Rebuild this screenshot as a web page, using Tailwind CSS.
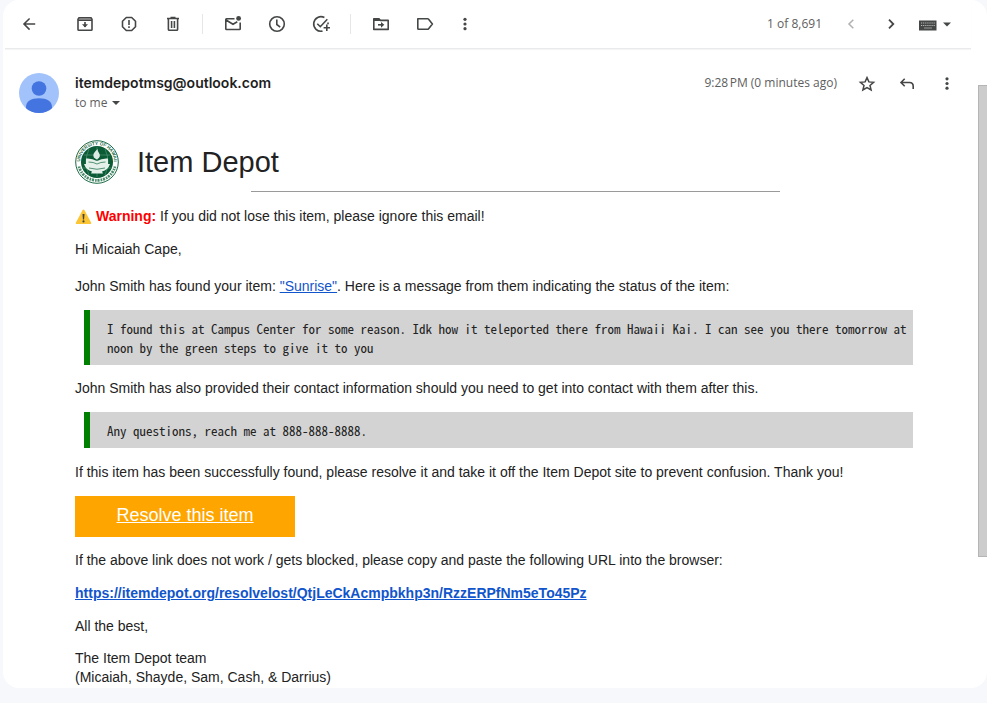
<!DOCTYPE html>
<html lang="en">
<head>
<meta charset="utf-8">
<meta name="viewport" content="width=device-width, initial-scale=1">
<title>Item Depot - Mail</title>
<script src="https://cdn.jsdelivr.net/npm/@tailwindcss/browser@4"></script>
</head>
<body class="min-h-screen bg-[#f6f8fc] pl-[3px] pb-[15px] text-[#222]">
<div class="flex overflow-hidden rounded-2xl bg-white">
  <main class="min-w-0 flex-1">
    <header class="ml-[2px] mr-[7px] flex h-[49px] items-center border-b border-[#e9eaeb] pl-[2px] font-['Open_Sans',sans-serif] text-[#444746] shadow-[0_1px_1px_#f5f5f5]">
      <button aria-label="Back" class="mr-3 flex h-10 w-11 items-center justify-center"><svg class="size-4" viewBox="4 4 16 16" fill="currentColor"><path d="M20 11H7.830l5.590-5.590L12 4l-8 8 8 8 1.410-1.410L7.830 13H20v-2z" transform="translate(2.8 2.8) scale(.77)"/></svg></button>
      <button aria-label="Archive" class="flex h-10 w-11 items-center justify-center"><svg class="size-5" viewBox="0 0 20 20" fill="none" stroke="currentColor" stroke-width="1.600"><path d="M4 3.800h12l1 1.400v10.200q0 .8-.8.8H3.800q-.8 0-.8-.8V5.200z"/><path d="M3 6.200h14M10 8v5"/><path d="M7 10.300h6l-3 3.300z" fill="currentColor" stroke="none"/><path d="M4 4h12v2H4z" fill="currentColor" fill-opacity=".35" stroke="none"/></svg></button>
      <button aria-label="Report spam" class="flex h-10 w-11 items-center justify-center"><svg class="size-5" viewBox="0 0 20 20" fill="none" stroke="currentColor" stroke-width="1.600"><path d="M7.300 3.500h5.400l3.800 3.800v5.400l-3.800 3.800H7.300l-3.800-3.800V7.300z" stroke-linejoin="round"/><path d="M10 6v5M10 12.300v1.700"/></svg></button>
      <button aria-label="Delete" class="flex h-10 w-11 items-center justify-center"><svg class="size-5" viewBox="0 0 20 20" fill="none" stroke="currentColor" stroke-width="1.600"><path d="M4 4.500h12M7.500 3.600h5M5.400 5v10.400q0 .9.900.9h7.400q.9 0 .9-.9V5M8.600 7v7M11.400 7v7"/></svg></button>
      <span class="ml-[7px] mr-2 h-5 w-px bg-[#e6e6e6]"></span>
      <button aria-label="Mark as unread" class="flex h-10 w-11 items-center justify-center"><svg class="size-5" viewBox="0 0 20 20" fill="none" stroke="currentColor" stroke-width="1.600"><path d="M11.500 4.800H3.500q-.7 0-.7.7v9.300q0 .7.700.7h13q.7 0 .7-.7V8.500M3 6l7 4.300 4.300-2.600"/><circle cx="15.600" cy="4.400" r="2.400" fill="currentColor" stroke="none"/></svg></button>
      <button aria-label="Snooze" class="flex h-10 w-11 items-center justify-center"><svg class="size-5" viewBox="0 0 20 20" fill="none" stroke="currentColor" stroke-width="1.600"><circle cx="10" cy="10" r="7.300"/><path d="M9.800 5.500v5l3.400 2.600"/></svg></button>
      <button aria-label="Add to tasks" class="flex h-10 w-11 items-center justify-center"><svg class="size-5" viewBox="0 0 20 20" fill="none" stroke="currentColor" stroke-width="1.600"><path d="M13.400 3.500A7.300 7.300 0 1 0 11.500 17.100M16.800 8.500q.3.900.3 1.800M6.300 9.700l3 3 7-7.500M15.800 10.500v6.400M12.600 13.700H19"/></svg></button>
      <span class="ml-[7px] mr-2 h-5 w-px bg-[#e6e6e6]"></span>
      <button aria-label="Move to" class="flex h-10 w-11 items-center justify-center"><svg class="size-5" viewBox="0 0 20 20" fill="none" stroke="currentColor" stroke-width="1.600"><path d="M2.800 4.800h5l1.600 1.600h7.800v9H2.800z" stroke-linejoin="round"/><path d="M2.800 4.200h5.500l1.500 2.800h-7z" fill="currentColor" stroke="none"/><path d="M7 10.800h4"/><path d="M10 7.900l3.300 2.900-3.300 2.900z" fill="currentColor" stroke="none"/></svg></button>
      <button aria-label="Labels" class="flex h-10 w-11 items-center justify-center"><svg class="size-5" viewBox="0 0 20 20" fill="none" stroke="currentColor" stroke-width="1.600" stroke-linejoin="round"><path d="M2.800 4.700h9.800q.5 0 .8.400l4 4.900-4 4.900q-.3.400-.8.400H3.500q-.7 0-.7-.7z"/></svg></button>
      <button aria-label="More" class="flex h-10 w-9 items-center justify-center"><svg class="size-5" viewBox="0 0 20 20" fill="currentColor"><circle cx="10" cy="5.300" r="1.600"/><circle cx="10" cy="10" r="1.600"/><circle cx="10" cy="14.700" r="1.600"/></svg></button>
      <span class="ml-auto mr-[9px] text-xs text-[#5e5e5e]">1 of 8,691</span>
      <button aria-label="Newer" class="flex h-10 w-10 items-center justify-center text-[#b0b1b1]"><svg class="size-5" viewBox="0 0 20 20" fill="none" stroke="currentColor" stroke-width="1.500"><path d="M12.300 5.700L8 10l4.300 4.300"/></svg></button>
      <button aria-label="Older" class="flex h-10 w-10 items-center justify-center"><svg class="size-5" viewBox="0 0 20 20" fill="none" stroke="currentColor" stroke-width="1.800"><path d="M8 5.700l4.300 4.300L8 14.300"/></svg></button>
      <button aria-label="Input tools" class="flex h-10 w-[60px] items-center gap-[6px] pl-2"><svg class="h-5 w-[18px]" viewBox="0 0 18 20"><path d="M0 6.500h17.500v10H0z" fill="#444746"/><path d="M2 9h14M2 11.500h14" stroke="#bbb" stroke-width="1.200" stroke-dasharray="1.200 .9"/><path d="M5 14h8" stroke="#999" stroke-width="1"/></svg><svg class="h-5 w-2" viewBox="0 0 8 20" fill="#444746"><path d="M0 8.500h8l-4 4z"/></svg></button>
    </header>

    <article class="pl-4 pr-[11px] pt-6 font-['Liberation_Sans',Arial,sans-serif]">
      <div class="flex items-start font-['Open_Sans',sans-serif]">
        <svg class="size-10 shrink-0" viewBox="0 0 40 40"><clipPath id="disc"><circle cx="20" cy="20" r="20"/></clipPath><circle cx="20" cy="20" r="20" fill="#a1c2fa"/><g clip-path="url(#disc)" fill="#4374e0"><circle cx="20" cy="15.500" r="7.300"/><path d="M7 34c0-6 5-8.800 13-8.800S33 28 33 34v6H7z"/></g></svg>
        <div class="ml-4 flex-1">
          <h3 class="text-sm leading-5 font-semibold text-[#1f1f1f] font-['Inter',sans-serif]">itemdepotmsg@outlook.com</h3>
          <button class="flex h-5 items-center gap-[5px] text-xs text-[#5e5e5e]">to me <svg class="h-2 w-2" viewBox="0 0 8 8" fill="#444746"><path d="M0 2h8L4 6z"/></svg></button>
        </div>
        <time class="mr-[10px] text-xs leading-5 text-[#5e5e5e]">9:28&#8239;PM (0 minutes ago)</time>
        <button aria-label="Star" class="flex h-[22px] w-10 items-center justify-center"><svg class="size-5" viewBox="0 0 20 20" fill="none" stroke="#444746" stroke-width="1.500"><path d="M10 3.600l1.900 4.300 4.700.4-3.600 3.100 1.100 4.600-4.100-2.400L5.900 16 7 11.400 3.400 8.300l4.700-.4z"/></svg></button>
        <button aria-label="Reply" class="flex h-[22px] w-10 items-center justify-center"><svg class="size-5" viewBox="0 0 20 20" fill="none" stroke="#444746" stroke-width="1.600"><path d="M7.700 4.800L4 8.500l3.700 3.700M4 8.500h8.500q3.700 0 3.700 3.700V15"/></svg></button>
        <button aria-label="More options" class="flex h-[22px] w-10 items-center justify-center"><svg class="size-5" viewBox="0 0 20 20" fill="#444746"><circle cx="10" cy="4.800" r="1.600"/><circle cx="10" cy="9.500" r="1.600"/><circle cx="10" cy="14.200" r="1.600"/></svg></button>
      </div>

      <div class="ml-14 mr-[11px] mt-[27px] pb-px text-sm leading-[19px]">
        <div class="flex items-center gap-[18px]">
          <svg class="size-11" viewBox="0 0 44 44" fill="none">
            <circle cx="22" cy="22" r="21.300" fill="#fff" stroke="#1c6b46" stroke-width="1"/>
            <circle cx="22" cy="22" r="16" fill="#0b5c36"/>
            <path id="ring" d="M8.200 31.500A16.900 16.900 0 1 1 35.800 31.500"/>
            <text fill="#1c6b46" font-size="4.600" font-weight="bold" font-family="Liberation Sans" text-anchor="middle"><textPath href="#ring" startOffset="50%">UNIVERSITY OF HAWAII</textPath></text>
            <path d="M4 26.500A18.600 18.600 0 0 0 40 26.500" stroke="#4c8b6c" stroke-width="2.800" stroke-dasharray="1.600 .8 2.200 1"/>
            <path d="M9 15h26M7 28h30M22 7v30M14 9q-6 13 0 26M30 9q6 13 0 26" stroke="#5d9a7c" stroke-width=".6"/>
            <path d="M11 18.500q6-.5 11 2.500 5-3 11-2.500v5.500h2q-2 6-8 7.500l1 2H16l1-2q-6-1.500-8-7.500h2z" fill="#e4f0e9"/>
            <path d="M13.500 22q5 0 8.500 2 3.500-2 8.500-2M14 28q8 2.500 16 0" stroke="#2e7a55" stroke-width=".8"/>
            <path d="M22 19.500q-4.500-1.500-3.500-5.500 1-2 4-5 0 2 1.500 4 2.500 3.500-2 6.500z" fill="#dcebe3"/>
          </svg>
          <h1 class="text-[29px] leading-[42px]">Item Depot</h1>
        </div>
        <hr class="mx-auto mt-[7px] w-[60%] border-t border-[#9a9a9a]">
        <p class="mt-[15px] flex items-center gap-1"><svg class="size-[17px]" viewBox="0 0 17 17"><path d="M8.500 1.500q.6 0 1 .7l6.700 12.500q.5 1.300-.9 1.300H1.700q-1.400 0-.9-1.300L7.500 2.200q.4-.7 1-.7z" fill="#fcc534"/><path d="M7.500 6h2l-.4 5.500H7.900z" fill="#424242"/><circle cx="8.500" cy="13.400" r="1.100" fill="#424242"/></svg><span><b class="text-[#f00]">Warning:</b> If you did not lose this item, please ignore this email!</span></p>
        <p class="mt-[14px]">Hi Micaiah Cape,</p>
        <p class="mt-[18px]">John Smith has found your item: <a href="#" class="text-[#15c] underline">"Sunrise"</a>. Here is a message from them indicating the status of the item:</p>
        <blockquote class="ml-[9px] mr-[43px] mt-[14px] border-l-[6px] border-[#008000] bg-[#d3d3d3] pb-2 pt-[9px] pl-[17px] font-['Noto_Sans_Mono_CJK_SC','Liberation_Mono',monospace] text-[13px] leading-[19px]">I found this at Campus Center for some reason. Idk how it teleported there from Hawaii Kai. I can see you there tomorrow at noon by the green steps to give it to you</blockquote>
        <p class="mt-[14px]">John Smith has also provided their contact information should you need to get into contact with them after this.</p>
        <blockquote class="ml-[9px] mr-[43px] mt-[14px] border-l-[6px] border-[#008000] bg-[#d3d3d3] pb-2 pt-[9px] pl-[17px] font-['Noto_Sans_Mono_CJK_SC','Liberation_Mono',monospace] text-[13px] leading-[19px]">Any questions, reach me at 888-888-8888.</blockquote>
        <p class="mt-[15px]">If this item has been successfully found, please resolve it and take it off the Item Depot site to prevent confusion. Thank you!</p>
        <a href="#" class="mt-[14px] flex h-[41px] w-[220px] items-center justify-center bg-[#ffa500] pb-[3px] text-lg text-white underline">Resolve this item</a>
        <p class="mt-[14px]">If the above link does not work / gets blocked, please copy and paste the following URL into the browser:</p>
        <p class="mt-[14px]"><a href="#" class="font-bold text-[#15c] underline">https://itemdepot.org/resolvelost/QtjLeCkAcmpbkhp3n/RzzERPfNm5eTo45Pz</a></p>
        <p class="mt-[14px]">All the best,</p>
        <p class="mt-[13px]">The Item Depot team<br>(Micaiah, Shayde, Sam, Cash, &amp; Darrius)</p>
      </div>
    </article>
  </main>
  <div class="w-[9px] pt-[85px]"><div class="h-[472px] border-y border-l border-[#b5b5b5] bg-[#ccc]"></div></div>
</div>
</body>
</html>
